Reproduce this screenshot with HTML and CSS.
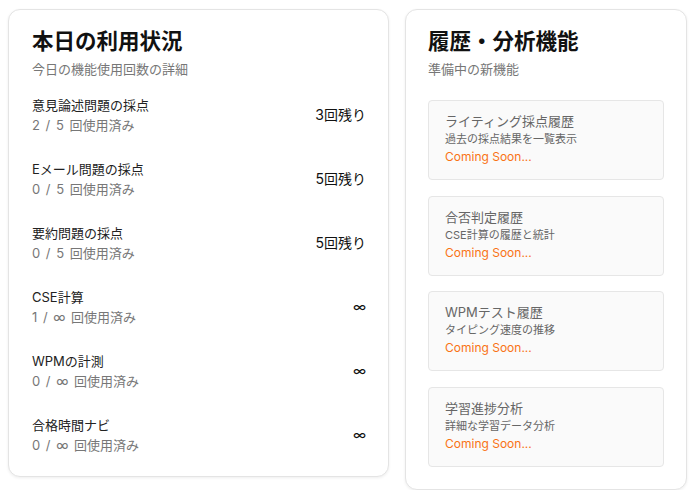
FILE: index.html
```html
<!DOCTYPE html>
<html lang="ja">
<head>
<meta charset="utf-8">
<link rel="stylesheet" href="styles.css">
</head>
<body>
<div class="page">
  <section class="card usage">
    <h2 class="card-title">本日の利用状況</h2>
    <p class="card-sub">今日の機能使用回数の詳細</p>
    <ul class="usage-list">
      <li class="usage-item"><div class="usage-info"><div class="usage-label">意見論述問題の採点</div><div class="usage-count">2 / 5 回使用済み</div></div><div class="usage-left">3回残り</div></li>
      <li class="usage-item"><div class="usage-info"><div class="usage-label">Eメール問題の採点</div><div class="usage-count">0 / 5 回使用済み</div></div><div class="usage-left">5回残り</div></li>
      <li class="usage-item"><div class="usage-info"><div class="usage-label">要約問題の採点</div><div class="usage-count">0 / 5 回使用済み</div></div><div class="usage-left">5回残り</div></li>
      <li class="usage-item"><div class="usage-info"><div class="usage-label">CSE計算</div><div class="usage-count">1 / ∞ 回使用済み</div></div><div class="usage-left">∞</div></li>
      <li class="usage-item"><div class="usage-info"><div class="usage-label">WPMの計測</div><div class="usage-count">0 / ∞ 回使用済み</div></div><div class="usage-left">∞</div></li>
      <li class="usage-item"><div class="usage-info"><div class="usage-label">合格時間ナビ</div><div class="usage-count">0 / ∞ 回使用済み</div></div><div class="usage-left">∞</div></li>
    </ul>
  </section>
  <section class="card history">
    <h2 class="card-title">履歴・分析機能</h2>
    <p class="card-sub">準備中の新機能</p>
    <div class="soon-list">
      <div class="soon-box"><div class="soon-title">ライティング採点履歴</div><div class="soon-desc">過去の採点結果を一覧表示</div><div class="soon-tag">Coming Soon...</div></div>
      <div class="soon-box"><div class="soon-title">合否判定履歴</div><div class="soon-desc">CSE計算の履歴と統計</div><div class="soon-tag">Coming Soon...</div></div>
      <div class="soon-box"><div class="soon-title">WPMテスト履歴</div><div class="soon-desc">タイピング速度の推移</div><div class="soon-tag">Coming Soon...</div></div>
      <div class="soon-box"><div class="soon-title">学習進捗分析</div><div class="soon-desc">詳細な学習データ分析</div><div class="soon-tag">Coming Soon...</div></div>
    </div>
  </section>
</div>
</body>
</html>
```
FILE: styles.css
```css
* { box-sizing: border-box; }
html, body { margin: 0; padding: 0; background: #ffffff; }
body {
  font-family: Inter, "Noto Sans CJK JP", "Noto Sans", sans-serif;
  color: #1a1a1a;
}
.page {
  display: grid;
  grid-template-columns: 381px 282px;
  column-gap: 16px;
  align-items: start;
  padding: 9px 13px 0 8px;
}
.card {
  background: #fff;
  border: 1px solid #e4e4e4;
  border-radius: 12px;
  box-shadow: 0 1px 3px rgba(0, 0, 0, 0.07);
  padding: 18px 22px 22px 23px;
}
.usage { padding-bottom: 9px; }
.history { padding-left: 22px; }
.card-title {
  margin: 0;
  font-size: 21.5px;
  line-height: 26px;
  font-weight: 700;
  color: #111;
}
.card-sub {
  margin: 5px 0 0;
  font-size: 13px;
  line-height: 20px;
  color: #777;
}
.usage-list {
  list-style: none;
  margin: 4px 0 0;
  padding: 0;
}
.usage-item {
  display: flex;
  align-items: center;
  justify-content: space-between;
  padding: 12px 0;
}
.usage-label {
  font-size: 13px;
  line-height: 20px;
  color: #222;
}
.usage-count {
  font-size: 13px;
  line-height: 20px;
  color: #777;
  word-spacing: 2px;
}
.usage-left {
  font-size: 14px;
  line-height: 20px;
  color: #111;
}
.soon-list {
  margin-top: 21px;
  display: flex;
  flex-direction: column;
  gap: 15.5px;
}
.soon-box {
  background: #fafafa;
  border: 1px solid #e6e6e6;
  border-radius: 4px;
  padding: 10px 16px 12px;
  height: 80px;
}
.soon-title {
  font-size: 13px;
  line-height: 20px;
  color: #666;
}
.soon-desc {
  font-size: 11px;
  line-height: 16px;
  color: #666;
}
.soon-tag {
  font-size: 12px;
  line-height: 20px;
  color: #f97316;
}
```
